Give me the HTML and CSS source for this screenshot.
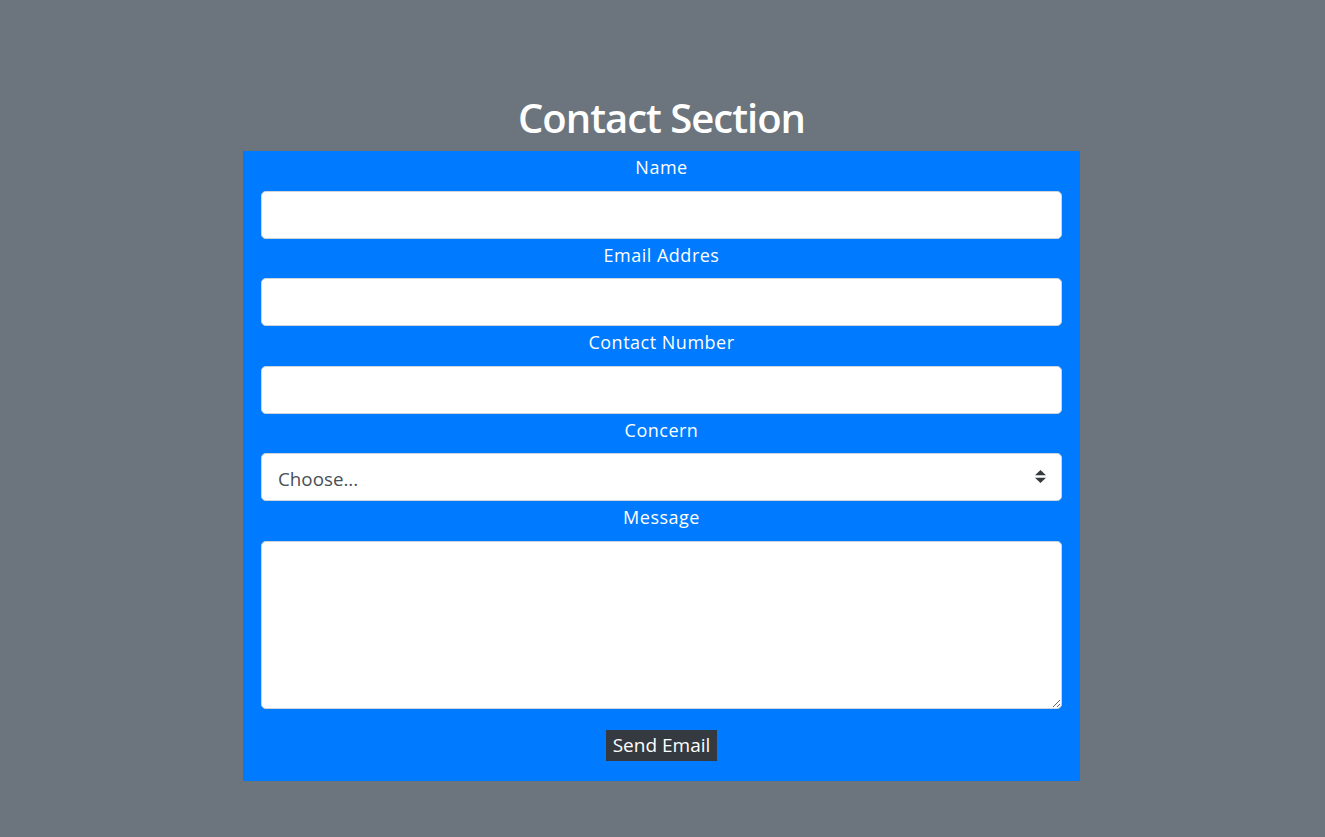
FILE: index.html
```html
<!DOCTYPE html>
<html lang="en">
<head>
<meta charset="utf-8">
<title>Contact Section</title>
<link rel="stylesheet" href="styles.css">
</head>
<body>
<main class="page">
  <h1 class="title">Contact Section</h1>
  <form class="contact-form">
    <label class="label" for="name">Name</label>
    <input class="control" id="name" type="text">
    <label class="label" for="email">Email Addres</label>
    <input class="control" id="email" type="email">
    <label class="label" for="phone">Contact Number</label>
    <input class="control" id="phone" type="text">
    <label class="label" for="concern">Concern</label>
    <div class="select-wrap">
      <select class="control select" id="concern">
        <option>Choose...</option>
      </select>
      <svg class="select-arrow" viewBox="0 0 4 5" width="11" height="13" preserveAspectRatio="none" aria-hidden="true">
        <path d="M2 0L0 2h4zm0 5L0 3h4z" fill="#343a40"/>
      </svg>
    </div>
    <label class="label" for="message">Message</label>
    <textarea class="control textarea" id="message"></textarea>
    <div class="actions">
      <button class="send" type="button">Send Email</button>
    </div>
  </form>
</main>
</body>
</html>
```
FILE: styles.css
```css
html, body {
  margin: 0;
  padding: 0;
}

body {
  background: #6c757d;
  font-family: "Open Sans", "Noto Sans", sans-serif;
  color: #fff;
}

.page {
  display: flex;
  flex-direction: column;
  align-items: center;
  padding-top: 94px;
  padding-right: 2px;
}

.title {
  margin: 0 0 9px;
  font-size: 40px;
  line-height: 48px;
  font-weight: 600;
  letter-spacing: -1px;
  color: #fff;
}

.contact-form {
  width: 837px;
  box-sizing: border-box;
  background: #007bff;
  padding: 0 18px 20px;
  display: flex;
  flex-direction: column;
}

.label {
  display: block;
  text-align: center;
  font-size: 18px;
  letter-spacing: 0.5px;
  line-height: 32.6px;
  margin-bottom: 7px;
  color: #fff;
}

.control {
  display: block;
  width: 100%;
  box-sizing: border-box;
  height: 48px;
  margin: 0;
  padding: 8px 16px;
  font-family: inherit;
  font-size: 20px;
  line-height: 30px;
  color: #495057;
  background: #fff;
  border: 1px solid #ced4da;
  border-radius: 4.8px;
  outline: none;
}

.select-wrap {
  position: relative;
}

.select {
  appearance: none;
  -webkit-appearance: none;
  font-size: 18.8px;
  padding: 10px 40px 6px 16px;
}

.select-arrow {
  position: absolute;
  right: 16px;
  top: 17px;
  pointer-events: none;
}

.textarea {
  height: 168px;
  resize: vertical;
}

.actions {
  display: flex;
  justify-content: center;
  margin-top: 21px;
}

.send {
  font-family: inherit;
  font-size: 19px;
  line-height: 29px;
  padding: 1px 7px;
  border: none;
  border-radius: 0;
  background: #343a40;
  color: #fff;
}
```
